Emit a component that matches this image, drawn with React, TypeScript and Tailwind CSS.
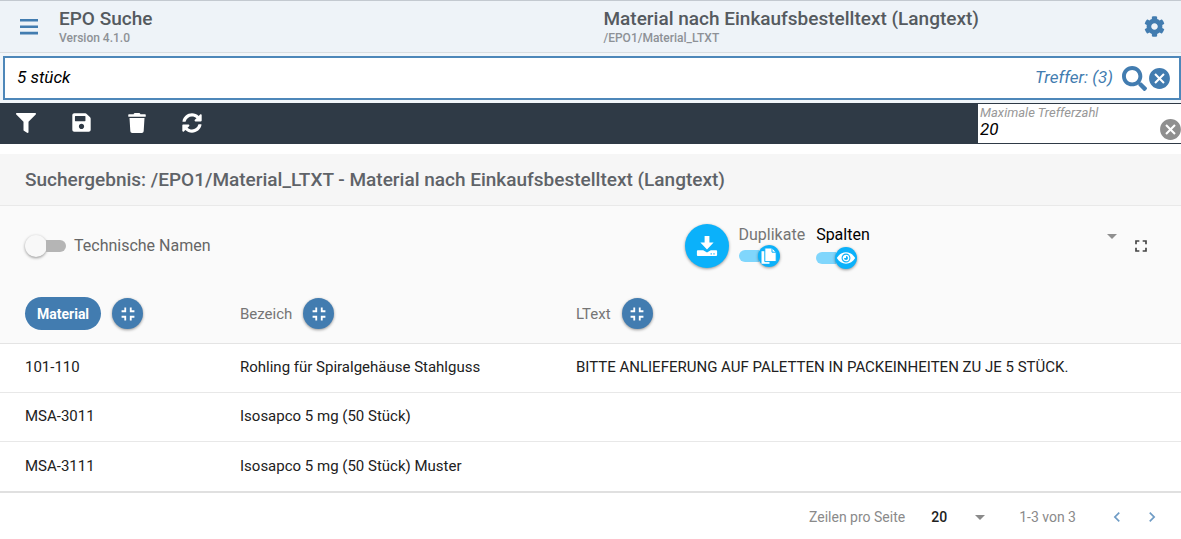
import React, { useState } from "react";
import { FaFilter, FaSearch, FaCog, FaSave, FaTrash, FaSyncAlt } from "react-icons/fa";
import { MdCancel, MdFullscreen, MdFullscreenExit, MdArrowDropDown, MdChevronLeft, MdChevronRight } from "react-icons/md";

const columns = [
  { key: "material", label: "Material", width: "w-[240px]", pill: true },
  { key: "bezeich", label: "Bezeich", width: "w-[336px]", pill: false },
  { key: "ltext", label: "LText", width: "", pill: false },
];

const rows = [
  ["101-110", "Rohling für Spiralgehäuse Stahlguss", "BITTE ANLIEFERUNG AUF PALETTEN IN PACKEINHEITEN ZU JE 5 STÜCK."],
  ["MSA-3011", "Isosapco 5 mg (50 Stück)", ""],
  ["MSA-3111", "Isosapco 5 mg (50 Stück) Muster", ""],
];

function MenuIcon() {
  return (
    <svg width="18" height="16" viewBox="0 0 18 16" fill="currentColor" aria-hidden="true">
      <path d="M0 0h18v2.6H0zM0 6.4h18V9H0zM0 12.8h18v2.6H0z" />
    </svg>
  );
}

function DownloadIcon() {
  return (
    <svg width="22" height="22" viewBox="0 0 22 22" aria-hidden="true">
      <path fill="#fff" d="M8.600 1h4.800v6.400h4.200L11 14.400 4.400 7.400h4.200z" />
      <path fill="#fff" d="M1.800 15.200h5.400L11 17.400l3.800-2.200h5.400c.5 0 .9.400.9.900v4c0 .5-.4.900-.9.900H1.800c-.5 0-.9-.4-.9-.9v-4c0-.5.4-.9.9-.9z" />
      <path fill="#0bb1fa" d="M14.600 18.200h1.200v1.200h-1.200zM17.400 18.200h1.200v1.200h-1.200z" />
    </svg>
  );
}

function PagesIcon() {
  return (
    <svg width="18" height="18" viewBox="0 0 18 18" aria-hidden="true">
      <path d="M1.500 4.200h8v12.600h-8z" fill="#fff" />
      <path d="M4.800 1h7.400l4 4v9.600H4.800z" fill="#fff" stroke="#0bb1fa" strokeWidth="1" />
      <path d="M12 1.200v4h4" fill="none" stroke="#0bb1fa" strokeWidth="1" />
    </svg>
  );
}

function EyeIcon() {
  return (
    <svg width="20" height="20" viewBox="0 0 20 20" aria-hidden="true">
      <path d="M.8 10C3.200 6.300 6.200 4.300 10 4.300s6.800 2 9.200 5.700c-2.400 3.700-5.400 5.700-9.200 5.700S3.200 13.700.8 10z" fill="#fff" />
      <circle cx="10" cy="10" r="3.900" fill="#fff" stroke="#0bb1fa" strokeWidth="1.100" />
      <path d="M10 8a2 2 0 1 1-2 2h2z" fill="#0bb1fa" />
    </svg>
  );
}

function IconSwitch({ label, icon, tone }: { label: string; icon: React.ReactNode; tone: string }) {
  const [on, setOn] = useState(true);
  return (
    <label className={`flex cursor-pointer flex-col ${tone}`}>
      <span className="text-base leading-5">{label}</span>
      <input type="checkbox" role="switch" className="sr-only" checked={on} onChange={() => setOn(!on)} />
      <span className="flex h-[22px] w-[42px] items-center">
        <span className="h-3 w-5 rounded-l-full bg-[#80d6fc]" />
        <span className="-ml-px flex size-[22px] shrink-0 items-center justify-center rounded-full bg-[#0bb1fa] shadow-[0_1px_3px_rgba(0,0,0,0.4)]">
          {icon}
        </span>
      </span>
    </label>
  );
}

export default function App() {
  const [technical, setTechnical] = useState(false);
  const [query, setQuery] = useState("5 stück");
  const [max, setMax] = useState("20");
  return (
    <main className="bg-white font-['Roboto',sans-serif] text-[#212121]">
      <header className="flex h-[53px] items-center border-t border-b border-t-[#c3c9d0] border-b-[#d9dde1] bg-[#eef3f8] pr-4 pl-5">
        <button aria-label="Menü" className="flex w-[39px] text-[#427cb0]">
          <MenuIcon />
        </button>
        <div className="flex-1">
          <h1 className="text-[19px] leading-[22px] font-medium text-[#555a5f]">EPO Suche</h1>
          <p className="text-xs leading-4 font-medium text-[#8d9196]">Version 4.1.0</p>
        </div>
        <div className="flex-1 pl-1">
          <h2 className="text-[19px] leading-[22px] font-medium text-[#555a5f]">Material nach Einkaufsbestelltext (Langtext)</h2>
          <p className="text-xs leading-4 font-medium text-[#8d9196]">/EPO1/Material_LTXT</p>
        </div>
        <button aria-label="Einstellungen" className="text-[#427cb0]">
          <FaCog size={21} />
        </button>
      </header>

      <div className="bg-[#f1f6fa] py-[3px] pl-[3px]">
        <form className="flex h-11 items-center border-2 border-[#4d87b9] bg-white pr-[7px] pl-3 text-[#427cb0]" onSubmit={(e) => e.preventDefault()}>
          <input
            aria-label="Suche"
            className="min-w-0 flex-1 bg-transparent text-[17px] text-black italic outline-none"
            value={query}
            onChange={(e) => setQuery(e.target.value)}
          />
          <span className="mr-[9px] text-[17px] italic">Treffer: (3)</span>
          <button aria-label="Suchen">
            <FaSearch size={25} />
          </button>
          <button type="button" aria-label="Suche leeren" onClick={() => setQuery("")}>
            <MdCancel size={25} />
          </button>
        </form>
      </div>

      <div className="flex h-[41px] bg-[#2f3a46]">
        <div className="flex flex-1 items-center gap-[35px] pb-0.5 pl-4 text-white">
          <button aria-label="Filter"><FaFilter size={20} /></button>
          <button aria-label="Speichern"><FaSave size={21} /></button>
          <button aria-label="Löschen"><FaTrash size={20} /></button>
          <button aria-label="Aktualisieren"><FaSyncAlt size={20} /></button>
        </div>
        <div className="my-px flex w-[203px] items-end overflow-hidden bg-white pl-0.5">
          <div className="flex min-w-0 flex-1 flex-col self-start pt-px">
            <label htmlFor="max" className="text-[13px] leading-4 text-[#989898] italic">Maximale Trefferzahl</label>
            <input id="max" className="h-4 w-full bg-transparent text-[17px] leading-4 text-black italic outline-none" value={max} onChange={(e) => setMax(e.target.value)} />
          </div>
          <button aria-label="Trefferzahl leeren" className="-mr-0.5 shrink-0 pb-px text-[#8f8f8f]" onClick={() => setMax("")}>
            <MdCancel size={25} />
          </button>
        </div>
      </div>

      <section className="mt-[10px]">
        <h2 className="flex h-[52px] items-center border-b border-[#e9e9e9] bg-[#f6f6f6] px-[25px] pt-0.5 text-[19px] font-medium text-[#5f6368] shadow-[0_1px_2px_rgba(0,0,0,0.05)]">
          Suchergebnis: /EPO1/Material_LTXT - Material nach Einkaufsbestelltext (Langtext)
        </h2>

        <div className="flex h-[79px] items-center bg-[#fafafa] pr-[30px] pl-[25px]">
          <label className="flex flex-1 cursor-pointer items-center gap-2 text-base text-[#666]">
            <input type="checkbox" role="switch" className="sr-only" checked={technical} onChange={() => setTechnical(!technical)} />
            <span className="flex w-[41px] items-center">
              <span className="size-[22px] shrink-0 rounded-full bg-[#f8f8f8] shadow-[0_1px_3px_rgba(0,0,0,0.4)]" />
              <span className="-ml-px h-3 flex-1 rounded-r-full bg-[#b5b5b5]" />
            </span>
            Technische Namen
          </label>
          <div className="flex flex-1 items-center">
            <button aria-label="Herunterladen" className="ml-[122px] flex size-11 shrink-0 items-center justify-center rounded-full bg-[#0bb1fa] shadow-[0_1px_3px_rgba(0,0,0,0.4)]">
              <DownloadIcon />
            </button>
            <div className="ml-[10px] flex gap-[11px] pt-0.5">
              <IconSwitch label="Duplikate" icon={<PagesIcon />} tone="text-[#757575]" />
              <IconSwitch label="Spalten" icon={<EyeIcon />} tone="gap-0.5 text-black" />
            </div>
          </div>
          <button aria-label="Auswahl öffnen" className="mr-[7px] pb-5 text-[#8f8f8f]"><MdArrowDropDown size={24} /></button>
          <button aria-label="Vollbild" className="text-[#444]"><MdFullscreen size={20} /></button>
        </div>

        <table className="w-full table-fixed text-left text-[15px]">
          <thead>
            <tr className="h-[58px] border-b border-[#e4e4e4] bg-[#fafafa]">
              {columns.map((c, i) => (
                <th key={c.key} className={`p-0 font-normal text-[#757575] ${c.width} ${i === 0 ? "pl-[25px]" : ""}`}>
                  <div className="flex items-center gap-[11px]">
                    {c.pill ? (
                      <button className="h-[33px] rounded-full bg-[#427cb0] px-3 text-sm font-bold text-white">{c.label}</button>
                    ) : (
                      <span>{c.label}</span>
                    )}
                    <button aria-label={`${c.label} verkleinern`} className="flex size-[31px] items-center justify-center rounded-full bg-[#427cb0] text-white shadow-[0_1px_3px_rgba(0,0,0,0.4)]">
                      <MdFullscreenExit size={22} />
                    </button>
                  </div>
                </th>
              ))}
            </tr>
          </thead>
          <tbody>
            {rows.map((row) => (
              <tr key={row[0]} className="h-[49px] border-b border-[#e8e8e8] last:h-[51px] last:border-b-2 last:border-[#e0e0e0]">
                {row.map((cell, i) => (
                  <td key={i} className={`p-0 whitespace-nowrap ${i === 0 ? "pl-[25px]" : ""}`}>{cell}</td>
                ))}
              </tr>
            ))}
          </tbody>
        </table>

        <footer className="flex h-[46px] items-center justify-end pt-0.5 pr-[19px] text-sm text-[#8a8a8a]">
          <label htmlFor="size">Zeilen pro Seite</label>
          <span className="relative ml-[26px] flex items-center">
            <select id="size" defaultValue="20" className="w-[61px] appearance-none bg-transparent text-sm font-medium text-[#212121] outline-none">
              <option>20</option>
              <option>50</option>
            </select>
            <MdArrowDropDown size={24} className="pointer-events-none absolute right-0" />
          </span>
          <span className="ml-[27px]">1-3 von 3</span>
          <button aria-label="Vorherige Seite" className="ml-[31px] text-[#6f9cc5]"><MdChevronLeft size={20} /></button>
          <button aria-label="Nächste Seite" className="ml-[15px] text-[#6f9cc5]"><MdChevronRight size={20} /></button>
        </footer>
      </section>
    </main>
  );
}
